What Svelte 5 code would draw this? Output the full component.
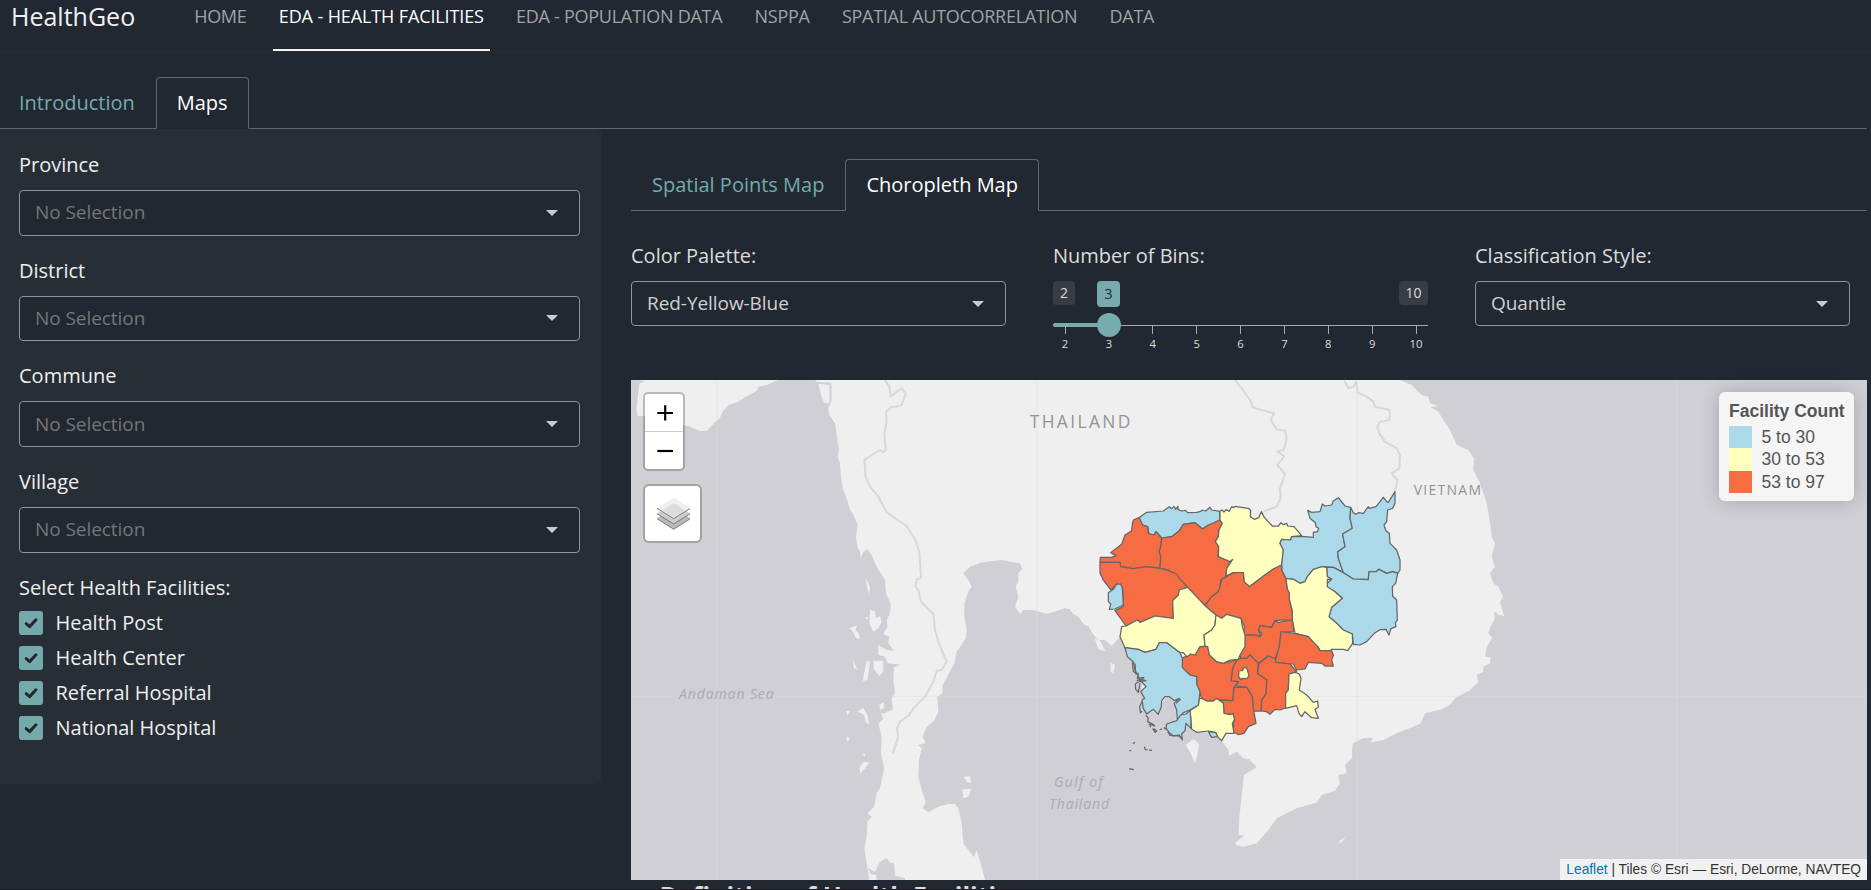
<script>
  const nav = ['HOME', 'EDA - HEALTH FACILITIES', 'EDA - POPULATION DATA', 'NSPPA', 'SPATIAL AUTOCORRELATION', 'DATA'];
  const filters = ['Province', 'District', 'Commune', 'Village'];
  const facilities = ['Health Post', 'Health Center', 'Referral Hospital', 'National Hospital'];
  const ticks = [2, 3, 4, 5, 6, 7, 8, 9, 10];
  const legend = [
    { color: '#abd9e9', label: '5 to 30' },
    { color: '#ffffbf', label: '30 to 53' },
    { color: '#f76d43', label: '53 to 97' }
  ];

  const low = '#abd9e9';
  const mid = '#ffffbf';
  const high = '#f76d43';

  const provinces = [
    { name: 'Oddar Meanchey', fill: low, points: '357,443 380,427 430,423 448,410 455,416 462,409 467,418 474,409 474,418 485,423 497,421 503,428 530,427 540,425 547,420 557,423 570,412 575,420 600,424 599,450 575,465 562,467 547,477 537,468 525,458 490,463 478,482 455,500 425,504 408,485 402,495 387,493 383,470 368,465' },
    { name: 'Banteay Meanchey', fill: high, points: '357,443 368,465 383,470 385,490 402,495 408,485 425,504 422,535 418,545 422,560 420,595 380,590 340,596 302,590 300,577 240,577 241,562 275,562 288,557 272,548 305,523 315,495 335,482 337,462 340,450' },
    { name: 'Siem Reap', fill: high, points: '425,504 455,500 478,482 490,463 525,458 537,468 547,477 562,467 600,450 607,460 597,480 595,500 586,515 596,530 594,560 632,574 620,595 618,620 602,630 600,655 595,665 575,680 555,707 503,652 470,620 445,600 420,595 422,560 418,545 423,525' },
    { name: 'Preah Vihear', fill: mid, points: '600,424 606,420 612,426 618,419 628,424 635,410 641,413 645,409 685,415 692,421 691,440 703,448 716,443 724,425 733,442 757,468 775,468 783,458 790,464 800,460 803,468 822,470 845,497 815,500 812,510 785,508 780,520 790,540 785,585 760,597 735,615 688,650 672,635 670,608 640,608 618,618 620,595 638,568 630,575 595,560 596,530 586,515 595,500 597,480 607,460 600,450' },
    { name: 'Stung Treng', fill: low, points: '845,499 880,502 880,487 893,485 896,475 888,470 886,458 870,445 863,421 875,427 900,425 907,402 915,408 935,405 940,393 955,383 975,408 992,412 990,445 997,475 968,492 975,530 953,545 955,565 970,608 940,592 905,590 897,598 880,598 862,620 855,635 840,640 820,628 797,625 785,600 785,585 790,540 780,520 785,508 812,510 815,500' },
    { name: 'Ratanakiri', fill: low, points: '992,412 1000,428 1008,433 1015,428 1030,430 1045,410 1048,415 1068,410 1090,382 1100,395 1105,397 1125,365 1125,400 1118,415 1103,420 1100,455 1092,465 1098,483 1108,490 1110,520 1130,540 1140,570 1140,600 1133,610 1118,605 1100,610 1077,598 1068,605 1047,605 1045,628 1000,627 970,608 955,565 953,545 975,530 968,492 997,475 990,445' },
    { name: 'Mondulkiri', fill: low, points: '920,592 940,592 970,608 1000,627 1045,629 1047,605 1068,605 1077,598 1100,610 1118,605 1133,610 1127,640 1117,650 1118,678 1130,690 1132,750 1126,758 1128,770 1113,776 1107,795 1098,778 1080,779 1063,790 1040,815 1020,825 1000,823 997,792 970,780 945,755 927,740 935,712 967,685 945,665 922,655 922,640 935,628 922,620' },
    { name: 'Kratie', fill: mid, points: '797,625 820,628 840,640 855,635 862,620 880,598 905,590 920,592 922,620 935,628 922,628 922,650 945,665 967,685 935,712 927,740 945,755 970,780 997,792 998,820 983,842 970,838 935,838 930,842 900,842 893,830 875,815 865,800 825,790 820,765 817,750 816,720 808,690 808,670 802,658' },
    { name: 'Kampong Thom', fill: high, points: '555,707 575,680 595,665 600,650 605,628 640,608 670,608 672,635 688,650 735,615 760,597 785,585 785,600 797,625 802,658 808,670 808,690 816,720 817,750 790,750 765,752 755,772 720,767 716,785 725,800 700,795 672,795 673,770 663,745 620,733 605,745 588,735' },
    { name: 'Kampong Cham', fill: high, points: '672,795 700,795 722,800 725,790 716,782 720,767 755,772 765,752 775,757 817,750 822,785 783,787 778,830 765,870 745,858 715,880 690,855 680,865 662,865 660,850 675,830' },
    { name: 'Tboung Khmum', fill: high, points: '783,785 822,790 865,800 893,830 900,842 935,842 940,855 935,870 940,888 915,888 905,880 865,877 855,897 830,900 820,882 765,877 778,830' },
    { name: 'Prey Veng', fill: high, points: '745,858 765,865 767,877 810,882 830,905 807,912 805,960 797,970 798,1013 780,1020 765,1018 750,1033 740,1025 723,1023 725,990 738,970 740,930 712,910 717,880' },
    { name: 'Kandal', fill: high, points: '662,865 680,865 690,855 715,880 712,910 740,930 738,970 725,990 723,1023 700,1023 697,980 680,952 648,948 655,935 633,933 638,895 650,870' },
    { name: 'Phnom Penh', fill: mid, points: '657,903 668,901 672,892 681,895 687,918 680,926 666,925 664,930 656,920' },
    { name: 'Takeo', fill: high, points: '642,952 680,952 697,980 699,1010 708,1060 685,1070 672,1090 655,1094 640,1085 642,1045 630,1032 612,1030 610,1000 595,990 638,992' },
    { name: 'Kampong Speu', fill: high, points: '485,865 513,852 525,855 540,830 563,830 568,855 590,875 610,880 650,868 638,895 633,933 655,935 642,952 638,992 590,988 580,993 560,993 545,985 530,942 530,920 510,915 487,893' },
    { name: 'Kampot', fill: mid, points: '538,985 545,985 560,993 580,993 590,985 597,990 610,1000 612,1030 630,1034 640,1030 643,1050 637,1060 642,1090 618,1090 605,1112 595,1103 585,1087 565,1083 530,1087 515,1078 510,1022 535,1005' },
    { name: 'Svay Rieng', fill: mid, points: '807,912 825,907 838,912 843,925 838,960 860,975 880,997 893,993 895,1012 885,1018 895,1045 875,1043 855,1025 845,1040 837,1030 830,1007 797,1015 797,970 805,960' },
    { name: 'Battambang', fill: high, points: '240,577 300,577 302,590 340,596 380,590 420,595 445,602 470,612 478,625 503,652 478,660 475,675 458,692 460,745 405,738 360,757 352,750 318,768 285,722 310,710 308,655 290,642 273,660 250,630 240,610' },
    { name: 'Pailin', fill: low, points: '265,668 280,658 290,642 302,642 307,655 310,705 285,717 268,718 272,702 265,695' },
    { name: 'Pursat', fill: mid, points: '318,768 352,750 360,757 405,738 460,745 458,692 475,675 478,660 503,652 555,707 588,735 585,765 575,780 552,795 555,828 540,830 525,855 513,852 500,860 490,848 480,848 440,818 418,818 408,838 375,847 355,838 315,833 300,800 305,770' },
    { name: 'Kampong Chhnang', fill: mid, points: '588,735 605,745 620,733 663,745 667,770 675,795 675,830 660,855 655,868 630,870 610,880 590,875 568,855 563,830 555,828 552,795 575,780 585,765' },
    { name: 'Koh Kong', fill: low, points: '315,833 355,838 375,847 408,838 418,818 440,818 480,848 487,865 487,893 510,915 530,920 530,942 540,965 535,1005 510,1020 490,1028 472,1050 470,1020 462,1000 478,985 463,992 448,980 435,980 425,992 424,1010 415,1033 400,1018 380,1032 370,1015 366,990 374,985 362,965 378,950 360,930 345,900 340,875 322,860' },
    { name: 'Preah Sihanouk', fill: low, points: '510,1020 498,1032 482,1035 470,1052 440,1062 438,1075 450,1090 460,1097 478,1095 487,1110 485,1092 495,1082 498,1060 513,1075 512,1040' },
    { name: 'Kep', fill: low, points: '565,1085 588,1088 592,1100 575,1102' }
  ];
</script>

{#snippet tabs(items)}
  <div class="tabs">
    {#each items as item, i}
      <div class="tab" class:active={i === 1}>{item}</div>
    {/each}
  </div>
{/snippet}

{#snippet select(value, empty)}
  <div class="select" class:empty>
    <span>{value}</span>
    <i class="caret"></i>
  </div>
{/snippet}

<div class="page">
  <header>
    <div class="brand">HealthGeo</div>
    <nav>
      {#each nav as item, i}
        <span class="nav-item" class:active={i === 1}>{item}</span>
      {/each}
    </nav>
  </header>

  <div class="outer-tabs">{@render tabs(['Introduction', 'Maps'])}</div>

  <div class="layout">
    <aside>
      {#each filters as f}
        <div class="group">
          <div class="label">{f}</div>
          {@render select('No Selection', true)}
        </div>
      {/each}
      <div class="label">Select Health Facilities:</div>
      <div class="checks">
        {#each facilities as f}
          <div class="check">
            <span class="box">
              <svg viewBox="0 0 24 24" width="24" height="24"><path d="M7.2 12.6 10.6 15.6 17 8.8" fill="none" stroke="#222830" stroke-width="3" stroke-linecap="round" stroke-linejoin="round" /></svg>
            </span>
            <span>{f}</span>
          </div>
        {/each}
      </div>
    </aside>

    <main>
      {@render tabs(['Spatial Points Map', 'Choropleth Map'])}
      <div class="controls">
        <div>
          <div class="label">Color Palette:</div>
          {@render select('Red-Yellow-Blue', false)}
        </div>
        <div>
          <div class="label">Number of Bins:</div>
          <div class="slider">
            <div class="slider-top">
              <span class="bound">2</span>
              <span class="current">3</span>
              <span class="bound last">10</span>
            </div>
            <div class="rail"><div class="fill"></div></div>
            <div class="knob"></div>
            <div class="ticks">
              {#each ticks as t}
                <span class="tick">{t}</span>
              {/each}
            </div>
          </div>
        </div>
        <div>
          <div class="label">Classification Style:</div>
          {@render select('Quantile', false)}
        </div>
      </div>

      <div class="map">
        <svg class="canvas" viewBox="33 30 3708 1500" width="1236" height="500">
          <rect x="33" y="30" width="3708" height="1500" fill="#d0cfd4" />
          <g fill="#efefef">
            <path d="M60,30 475,30 440,45 415,50 410,62 370,85 355,95 325,105 308,125 300,143 283,158 262,182 240,183 205,168 185,165 70,138 52,137 50,115 58,40 75,35Z" />
            <path d="M585,30 595,40 603,75 612,98 622,98 625,120 628,135 645,160 648,180 652,210 657,235 653,260 660,280 663,320 668,355 680,385 690,420 700,435 713,465 708,500 712,530 720,545 722,565 730,545 742,538 755,555 770,590 795,630 798,670 813,705 808,735 800,750 803,770 790,792 808,800 805,820 822,842 800,840 775,825 775,855 795,860 803,880 842,884 822,892 820,930 825,970 815,985 818,1020 800,1025 790,1048 775,1060 785,1100 783,1150 793,1195 785,1230 780,1255 770,1270 762,1310 742,1330 755,1340 742,1355 740,1400 733,1435 740,1480 748,1530 1095,1530 1085,1490 1070,1440 1062,1462 1045,1440 1030,1420 1025,1360 1015,1315 1005,1302 985,1302 955,1310 925,1327 908,1315 917,1295 905,1260 895,1220 897,1170 905,1135 893,1125 917,1120 908,1100 920,1070 940,1055 955,1025 952,980 967,970 968,945 1003,880 1010,845 1038,805 1040,780 1033,740 1033,700 1045,665 1055,650 1045,630 1030,610 1050,590 1085,577 1145,570 1200,580 1207,597 1195,610 1195,635 1187,650 1195,680 1185,710 1200,732 1210,720 1240,720 1280,732 1335,715 1350,718 1360,733 1375,740 1393,765 1405,768 1417,790 1435,810 1455,810 1475,828 1500,800 1515,835 1545,880 1565,930 1570,985 1580,1030 1600,1022 1618,1032 1630,990 1645,978 1665,1000 1670,1045 1640,1075 1660,1095 1690,1080 1700,1065 1715,1080 1770,1090 1805,1112 1825,1140 1828,1157 1850,1145 1870,1165 1888,1168 1910,1192 1872,1215 1865,1280 1858,1340 1856,1395 1874,1397 1845,1418 1850,1426 1870,1430 1910,1420 1945,1380 1970,1345 2030,1315 2090,1298 2105,1275 2145,1262 2160,1240 2155,1215 2180,1210 2175,1185 2195,1165 2198,1120 2230,1105 2260,1103 2250,1118 2290,1110 2330,1090 2380,1070 2402,1060 2415,1030 2465,1018 2490,1005 2505,985 2550,960 2575,935 2570,915 2590,905 2590,890 2610,880 2612,862 2595,860 2600,830 2617,805 2605,790 2612,770 2625,745 2622,722 2650,680 2635,650 2620,640 2610,610 2625,590 2615,560 2625,520 2615,500 2612,470 2600,400 2580,340 2560,300 2562,265 2545,240 2510,225 2490,180 2470,150 2455,125 2432,112 2455,108 2430,98 2425,80 2405,75 2375,45 2340,30Z" />
            <path d="M737,625 750,650 748,672 740,650ZM750,720 765,722 768,745 780,738 785,755 775,775 760,785 748,760ZM688,775 712,765 706,780 718,792 718,808 706,802 700,786ZM760,872 790,872 790,905 778,917 762,898ZM740,872 750,875 742,930 728,932ZM698,865 712,900 702,895ZM712,1025 730,1013 742,1035 747,1063 738,1060 733,1035 720,1028ZM678,1023 690,1022 682,1037ZM679,1098 690,1108 682,1115ZM778,1005 790,997 792,1015 781,1020ZM783,1030 797,1030 790,1052ZM732,1175 748,1178 735,1195 720,1212 719,1190ZM728,1151 737,1152 733,1160ZM1032,1220 1050,1219 1054,1238 1040,1236ZM1027,1258 1053,1257 1045,1280 1030,1285ZM735,740 745,742 740,750ZM1420,760 1440,785 1425,780ZM1424,805 1440,812 1456,843 1435,838ZM1472,878 1485,885 1480,910 1472,905ZM1697,1125 1720,1107 1737,1122 1733,1150 1725,1182 1712,1150ZM2158,1413 2176,1400 2167,1415 2160,1420ZM2617,720 2640,695 2652,738 2635,734Z" />
          </g>
          <g fill="#d0cfd4">
            <path d="M745,1495 765,1505 780,1475 800,1465 808,1477 822,1480 825,1517 855,1525 855,1530 770,1530 768,1515 752,1512Z" />
          </g>
          <path d="M592,38 631,42 632,90 620,120" fill="none" stroke="#d0cfd4" stroke-width="6" />
          <g fill="none" stroke="#d8d8d9" stroke-width="6" stroke-linejoin="round">
            <path d="M795,30 808,50 812,80 830,65 845,55 857,72 845,105 830,110 815,110 798,125 800,155 793,190 797,240 790,247 780,240 750,258 733,270 737,320 750,350 775,380 800,427 860,468 885,508 898,545 903,625 890,628 887,650 895,660 903,695 940,732 945,780 955,815 965,840 980,875 965,900 950,902 940,935 915,980 880,1015 868,1035 840,1055 830,1075 835,1100 818,1152" />
            <path d="M1845,30 1865,55 1890,90 1900,113 1962,130 1952,150 1970,178 1995,182 2000,205 1992,238 1972,245 1993,258 1972,285 1995,312 1980,355 1982,385 1970,410 1930,425" />
            <path d="M2173,32 2185,55 2200,50 2208,35 2213,68 2240,80 2260,95 2265,110 2310,120 2308,150 2280,155 2272,170 2278,190 2295,215 2330,235 2340,255 2338,295 2315,310 2332,330 2325,365" />
          </g>
          <g stroke="#dcdce0" stroke-opacity=".35" stroke-width="4">
            <path d="M291,30V1530M1251,30V1530M2212,30V1530M3171,30V1530M33,979H3741" />
          </g>
          <g class="place" fill="#949494">
            <text x="1229" y="173" font-size="52" textLength="302">THAILAND</text>
            <text x="2381" y="375" font-size="42" textLength="202">VIETNAM</text>
          </g>
          <g class="place sea" fill="#abaab0" font-size="42">
            <text x="177" y="987" textLength="284">Andaman Sea</text>
            <text x="1302" y="1250" textLength="146">Gulf of</text>
            <text x="1287" y="1317" textLength="180">Thailand</text>
          </g>
          <g transform="translate(1200 0)" stroke="#666" stroke-width="3.75" stroke-linejoin="round">
            {#each provinces as p (p.name)}
              <polygon points={p.points} fill={p.fill} />
            {/each}
            <g fill="none">
              <path d="M337,877 340,905 347,908 345,880M345,912 355,910 352,925 372,922 358,935 378,932 362,928 350,932M356,935 346,942 347,958 355,967 360,940M366,995 359,1010 361,1028 367,1024M378,1035 385,1045 383,1055 398,1062 404,1068 388,1062 392,1072M398,1075 405,1087 410,1083 402,1076M419,1079 426,1077M431,1073 440,1078M443,1086 450,1096 462,1098 476,1097 484,1104M328,1143 333,1141M339,1121 345,1117M373,1130 376,1139 383,1140M387,1140 396,1141M328,1196 335,1198M335,1196 341,1200M468,1000 482,987" />
            </g>
          </g>
        </svg>

        <div class="zoom">
          <span><svg width="38" height="37" viewBox="0 0 38 37"><path d="M12.3 19H28M20.2 11.2v15.2" stroke="#000" stroke-width="2.2" /></svg></span>
          <span><svg width="38" height="37" viewBox="0 0 38 37"><path d="M12.3 19H28" stroke="#000" stroke-width="2.2" /></svg></span>
        </div>

        <div class="layers">
          <svg viewBox="110 382 100 100" width="33.3" height="33.3">
            <path d="M110,446 160,479 210,446 160,413Z" fill="#b9b9b9" />
            <path d="M110,447 160,479 210,447" fill="none" stroke="#777" stroke-width="3" />
            <path d="M110,432 160,463 210,432 160,399Z" fill="#cdcdcd" />
            <path d="M110,432 160,463 210,432" fill="none" stroke="#777" stroke-width="3" />
            <path d="M110,416 160,447 210,416 160,384Z" fill="#efefef" />
            <path d="M134,416 160,401 186,416 192,424 160,445 128,424Z" fill="#dcdcdc" />
            <path d="M110,416 160,447 210,416" fill="none" stroke="#777" stroke-width="3" />
          </svg>
        </div>

        <div class="legend">
          <strong>Facility Count</strong>
          {#each legend as l}
            <div class="legend-row"><i style:background={l.color}></i><span>{l.label}</span></div>
          {/each}
        </div>

        <div class="attribution"><span>Leaflet</span> | Tiles © Esri — Esri, DeLorme, NAVTEQ</div>
      </div>
      <h3>Definition of Health Facilities</h3>
    </main>
  </div>
</div>

<style>
  :global(body) {
    margin: 0;
    background: #222831;
  }
  .page {
    box-sizing: border-box;
    width: 1871px;
    height: 890px;
    overflow: hidden;
    background: #222831;
    border-bottom: 1px solid #1e1b24;
    color: #dcdcdc;
    font: 20px/30px 'Open Sans', sans-serif;
  }
  header {
    display: flex;
    box-sizing: border-box;
    height: 52px;
    padding-left: 11px;
    border-bottom: 1px solid #262c34;
    line-height: 32px;
  }
  .brand {
    width: 176.5px;
    font-size: 25px;
    color: #f0f0f0;
  }
  nav {
    display: flex;
    gap: 19.8px;
    padding-left: 0.4px;
    font-size: 18px;
    letter-spacing: -0.28px;
  }
  .nav-item {
    box-sizing: border-box;
    height: 51px;
    padding: 0 6.25px;
    border-bottom: 2px solid transparent;
    color: #a0a2a4;
    white-space: nowrap;
  }
  .nav-item.active {
    color: #fff;
    border-color: #f5f2ec;
    letter-spacing: -0.12px;
  }
  .outer-tabs {
    width: 1867px;
    padding-top: 25px;
  }
  .outer-tabs :global(.tab:first-child) {
    margin-left: -2px;
  }
  .tabs {
    display: flex;
    box-sizing: border-box;
    height: 52px;
    border-bottom: 1px solid #60646b;
  }
  .tab {
    box-sizing: border-box;
    height: 52px;
    padding: 0 20px;
    border: 1px solid transparent;
    border-radius: 4px 4px 0 0;
    line-height: 49px;
    color: #72abad;
    white-space: nowrap;
  }
  .tab.active {
    color: #fff;
    background: #222831;
    border-color: #60646b;
    border-bottom-color: #222831;
  }
  .layout {
    display: flex;
    align-items: flex-start;
    gap: 30px;
  }
  aside {
    box-sizing: border-box;
    width: 601px;
    height: 655px;
    padding: 20px 21px 0 19px;
    background: #282e36;
    border-radius: 0 5px 5px 0;
    color: #eee;
  }
  .group {
    height: 105.67px;
  }
  .label {
    padding-top: 1px;
  }
  .select {
    display: flex;
    justify-content: space-between;
    align-items: center;
    box-sizing: border-box;
    height: 45px;
    margin-top: 10px;
    padding: 0 21px 0 15px;
    border: 1px solid #909398;
    border-radius: 4px;
    background: #222831;
    color: #d0d0d0;
    font-size: 19px;
    letter-spacing: -0.06px;
  }
  .select span {
    margin-top: -2px;
  }
  .select.empty {
    height: 45.67px;
    color: #757575;
  }
  .select.empty span {
    margin-top: -1px;
  }
  .caret {
    border: 6.25px solid transparent;
    border-top-color: #ccc;
    border-bottom: 0;
  }
  .checks {
    padding-top: 3px;
  }
  .check {
    display: flex;
    align-items: center;
    gap: 12.5px;
    height: 35px;
  }
  .box {
    width: 24px;
    height: 24px;
    border-radius: 3px;
    background: #75aaac;
  }
  .box svg {
    display: block;
  }
  main {
    width: 1236px;
    padding-top: 30px;
  }
  .controls {
    display: grid;
    grid-template-columns: repeat(3, 375px);
    gap: 47px;
    height: 140px;
    padding-top: 29px;
    box-sizing: content-box;
  }
  .slider {
    position: relative;
    margin-top: 10px;
  }
  .slider-top {
    display: flex;
    align-items: flex-start;
    height: 42px;
  }
  .bound,
  .current {
    box-sizing: border-box;
    width: 22px;
    height: 24px;
    border-radius: 4px;
    background: #383c45;
    text-align: center;
    font-size: 14px;
    line-height: 23px;
  }
  .current {
    width: 23px;
    height: 26px;
    margin: 0 auto 0 22px;
    background: #77abad;
    color: #222831;
    line-height: 26px;
  }
  .last {
    width: 29px;
  }
  .rail {
    height: 4px;
    background: linear-gradient(#aaa, #aaa) 0 2px / 100% 1px no-repeat;
  }
  .fill {
    width: 56px;
    height: 4px;
    border-radius: 2px;
    background: #77abad;
  }
  .knob {
    position: absolute;
    left: 44px;
    top: 32px;
    width: 24px;
    height: 24px;
    border-radius: 50%;
    background: #77abad;
  }
  .ticks {
    display: flex;
    justify-content: space-between;
    margin-top: -1px;
    padding: 0 2px 0 2px;
  }
  .tick {
    width: 20px;
    padding-top: 9px;
    background: linear-gradient(#aaa, #aaa) 50% 0 / 1px 8px no-repeat;
    text-align: center;
    font-size: 11.25px;
    line-height: 18px;
  }
  .map {
    position: relative;
    height: 500px;
    font-family: 'Liberation Sans', Arial, sans-serif;
  }
  .canvas {
    display: block;
  }
  .place {
    font-family: 'Open Sans', sans-serif;
  }
  .sea {
    font-style: italic;
  }
  .zoom,
  .layers {
    position: absolute;
    left: 12px;
    border: 2px solid rgba(0, 0, 0, 0.22);
    border-radius: 5px;
    background: #fff;
    background-clip: padding-box;
  }
  .zoom {
    top: 12px;
    width: 38px;
    height: 75px;
  }
  .zoom span {
    display: block;
    height: 37px;
  }
  .zoom span:first-child {
    border-bottom: 1px solid #ccc;
  }
  .layers {
    display: grid;
    place-items: center;
    top: 104px;
    box-sizing: border-box;
    width: 59px;
    height: 59px;
    padding-left: 1.5px;
    border-radius: 6px;
  }
  .legend {
    position: absolute;
    top: 12px;
    right: 13px;
    box-sizing: border-box;
    width: 135px;
    height: 109px;
    padding: 7.5px 10px;
    border-radius: 6px;
    background: #f5f5f6;
    box-shadow: 0 0 19px rgba(0, 0, 0, 0.2);
    color: #555;
    font-size: 17.5px;
    line-height: 22.5px;
    white-space: nowrap;
  }
  .legend strong {
    display: block;
    height: 26.3px;
  }
  .legend-row {
    display: flex;
    gap: 10px;
    height: 22.5px;
  }
  .legend-row i {
    width: 22.5px;
    height: 22.5px;
  }
  .attribution {
    position: absolute;
    right: 0;
    bottom: 0;
    padding: 0 6px;
    background: rgba(255, 255, 255, 0.7);
    color: #333;
    font-size: 13.75px;
    line-height: 21px;
    white-space: nowrap;
  }
  .attribution span {
    color: #0078a8;
  }
  h3 {
    margin: 0;
    padding-left: 28.5px;
    font-size: 25px;
    font-weight: 700;
    line-height: 30px;
  }
</style>
